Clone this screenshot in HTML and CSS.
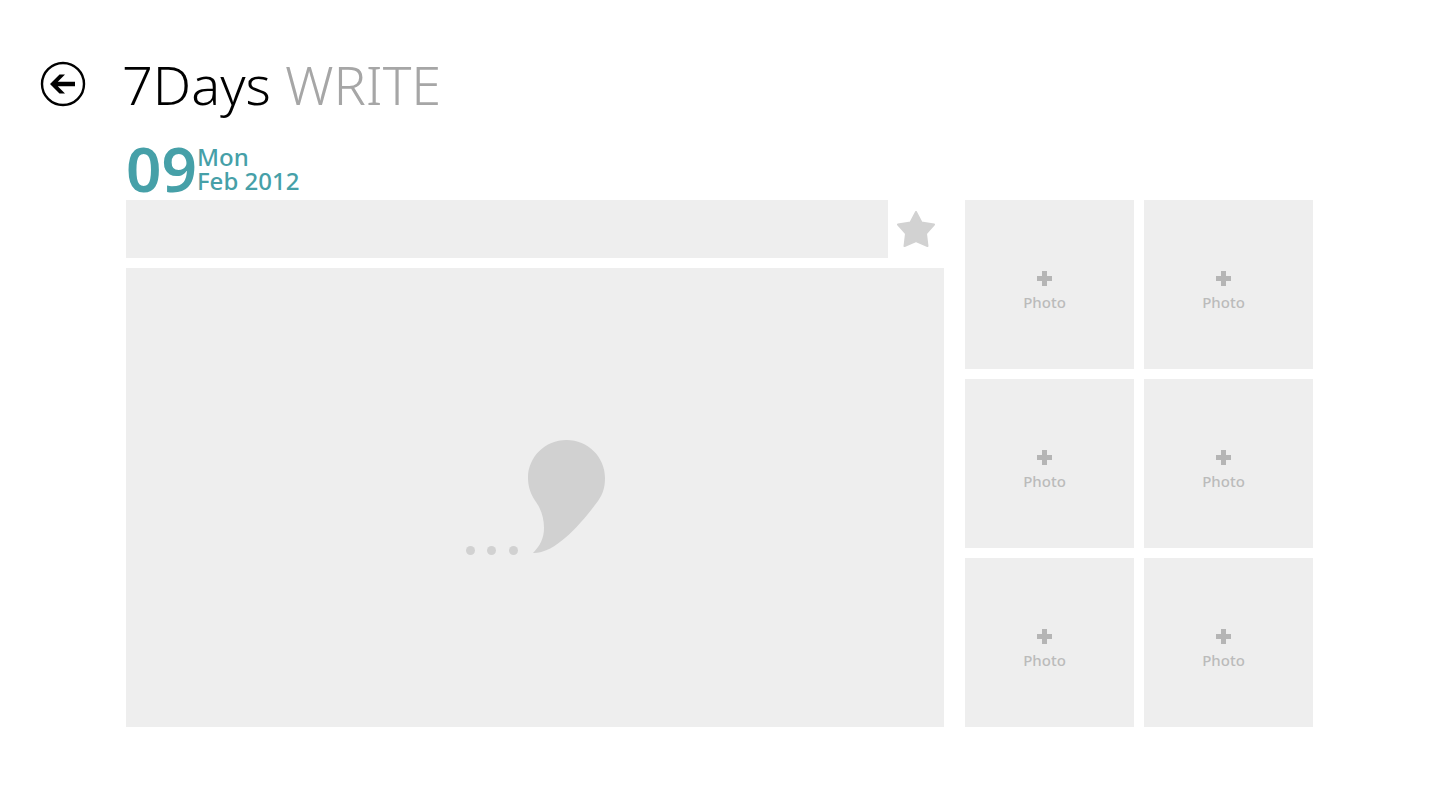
FILE: index.html
```html
<!DOCTYPE html>
<html lang="en">
<head>
    <meta charset="UTF-8">
    <meta name="viewport" content="width=device-width, initial-scale=1.0">
    <title>7Days - Write</title>
    <link rel="stylesheet" href="styles.css">
</head>
<body>
    <header>
        <button class="back" type="button" aria-label="Back">
            <svg viewBox="0 0 46 46" width="46" height="46">
                <circle cx="23" cy="23" r="21" fill="none" stroke="#000" stroke-width="2.4"/>
                <path d="M10 23 L19.500 13.500 H25 L17.800 20.800 H35 V25.200 H17.800 L25 32.500 H19.500 Z"/>
            </svg>
        </button>
        <h1>7Days <span>WRITE</span></h1>
    </header>

    <main>
        <div class="date">
            <span class="day">09</span>
            <div class="month">
                <div>Mon</div>
                <div>Feb 2012</div>
            </div>
        </div>

        <div class="content">
            <form class="entry">
                <div class="title-row">
                    <input type="text" class="title-input" aria-label="Title">
                    <button class="favorite" type="button" aria-label="Favorite">
                        <svg viewBox="0 0 38 36" width="38" height="36">
                            <path d="M19 1 L24.500 11.500 L37 13.500 L29 22.500 L30.500 35 L19 30 L7.500 35 L9 22.500 L1 13.500 L13.500 11.500 Z" fill="#d2d2d2" stroke="#d2d2d2" stroke-width="2" stroke-linejoin="round"/>
                        </svg>
                    </button>
                </div>
                <div class="text-box">
                    <textarea aria-label="Diary text"></textarea>
                    <svg class="quote" viewBox="0 0 139 115" width="139" height="115" fill="#d1d1d1">
                        <circle cx="4.500" cy="110.500" r="4.500"/>
                        <circle cx="25.500" cy="110.500" r="4.500"/>
                        <circle cx="47.500" cy="110.500" r="4.500"/>
                        <path d="M100.500 0 C79 0 62 17 62 38 C62 47 65 55 70 62 C75 69 78 78 78 88 C78 98 74 106 67 113 C84 114 107 95 132 61 C137 54 139 47 139 38 C139 17 122 0 100.500 0 Z"/>
                    </svg>
                </div>
            </form>

            <div class="photos">
                <button type="button" class="photo">
                    <svg viewBox="0 0 15 15" width="15" height="15"><path d="M5 0h5v5h5v5h-5v5h-5v-5h-5v-5h5z"/></svg>
                    Photo
                </button>
                <button type="button" class="photo">
                    <svg viewBox="0 0 15 15" width="15" height="15"><path d="M5 0h5v5h5v5h-5v5h-5v-5h-5v-5h5z"/></svg>
                    Photo
                </button>
                <button type="button" class="photo">
                    <svg viewBox="0 0 15 15" width="15" height="15"><path d="M5 0h5v5h5v5h-5v5h-5v-5h-5v-5h5z"/></svg>
                    Photo
                </button>
                <button type="button" class="photo">
                    <svg viewBox="0 0 15 15" width="15" height="15"><path d="M5 0h5v5h5v5h-5v5h-5v-5h-5v-5h5z"/></svg>
                    Photo
                </button>
                <button type="button" class="photo">
                    <svg viewBox="0 0 15 15" width="15" height="15"><path d="M5 0h5v5h5v5h-5v5h-5v-5h-5v-5h5z"/></svg>
                    Photo
                </button>
                <button type="button" class="photo">
                    <svg viewBox="0 0 15 15" width="15" height="15"><path d="M5 0h5v5h5v5h-5v5h-5v-5h-5v-5h5z"/></svg>
                    Photo
                </button>
            </div>
        </div>
    </main>
</body>
</html>
```
FILE: styles.css
```css
* {
    box-sizing: border-box;
}

body {
    margin: 0;
    background-color: #fff;
    font-family: "Noto Sans", "Open Sans", sans-serif;
}

button {
    padding: 0;
    border: none;
    background: none;
    font-family: inherit;
    cursor: pointer;
}

svg {
    display: block;
}

header {
    display: flex;
    align-items: center;
    gap: 36px;
    padding: 44px 40px 0;
}

h1 {
    margin: 0;
    font-size: 54px;
    font-weight: 300;
    line-height: 80px;
    color: #000;
}

h1 span {
    color: #a6a6a6;
}

main {
    padding: 17px 127px 40px 126px;
}

.date {
    display: flex;
    align-items: center;
    height: 55px;
    margin-bottom: 4px;
    color: #46a0a8;
}

.day {
    font-size: 62px;
    font-weight: 600;
    line-height: 55px;
}

.month {
    font-size: 24px;
    font-weight: 500;
    line-height: 24px;
}

.content {
    display: grid;
    grid-template-columns: 818fr 348fr;
    gap: 21px;
}

.entry {
    display: flex;
    flex-direction: column;
    gap: 10px;
}

.title-row {
    display: flex;
}

.title-input {
    flex: 1;
    min-width: 0;
    height: 58px;
    padding: 0 16px;
    border: none;
    background-color: #eee;
    font-family: inherit;
    font-size: 24px;
}

.favorite {
    display: flex;
    align-items: center;
    justify-content: center;
    width: 56px;
}

.text-box {
    position: relative;
    flex: 1;
    display: flex;
}

.text-box textarea {
    flex: 1;
    min-width: 0;
    padding: 16px;
    border: none;
    background-color: #eee;
    font-family: inherit;
    font-size: 15px;
    resize: none;
}

.quote {
    position: absolute;
    inset: 0;
    margin: auto;
    pointer-events: none;
}

.photos {
    display: grid;
    grid-template-columns: 1fr 1fr;
    gap: 10px;
}

.photo {
    display: flex;
    flex-direction: column;
    align-items: center;
    justify-content: center;
    gap: 4px;
    aspect-ratio: 1;
    padding: 16px 10px 0 0;
    background-color: #eee;
    color: #bbb;
    font-size: 15px;
    font-weight: 500;
    line-height: 24px;
}

.photo svg {
    fill: #b5b5b5;
}
```
